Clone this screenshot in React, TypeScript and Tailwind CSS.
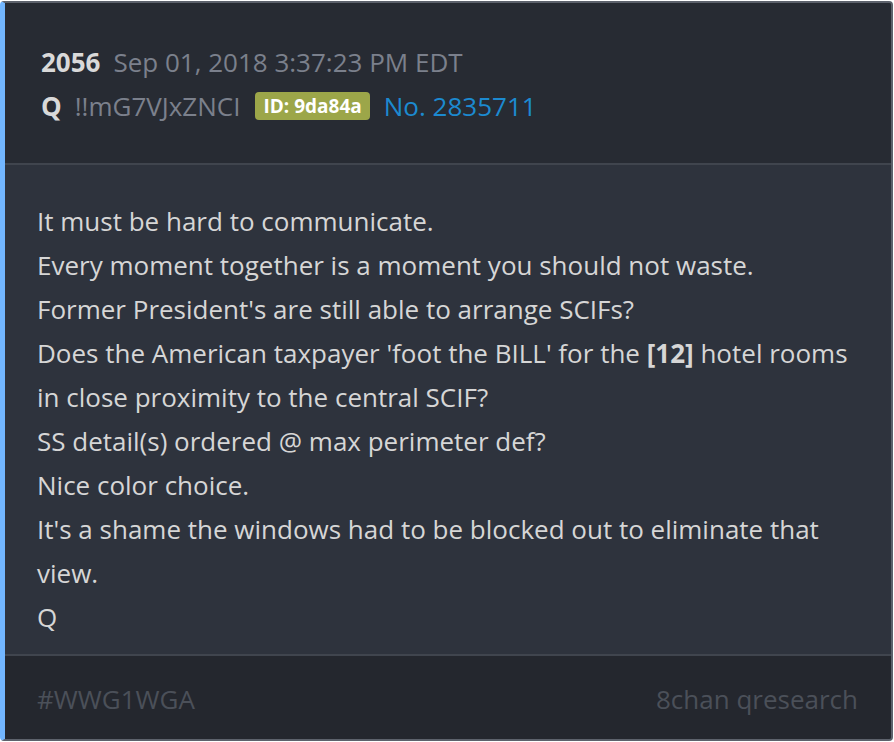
export default function App() {
  const lines = [
    "It must be hard to communicate.",
    "Every moment together is a moment you should not waste.",
    "Former President's are still able to arrange SCIFs?",
  ];
  return (
    <div className="min-h-screen bg-white" style={{ fontFamily: "'Open Sans', 'Liberation Sans', sans-serif" }}>
      <div className="w-[894px] h-[742px] pt-[1px] pr-[1px] pb-[1px]">
        <div className="flex h-full flex-col overflow-hidden rounded-[4px] border-2 border-l-[5px] border-[#5d626c] border-l-[#72b6ff] bg-[#2e333d]">
          {/* header */}
          <div className="bg-[#272b33] pl-[36px] pt-[37px] pb-[35px] text-[26px] leading-[44px]">
            <div className="flex items-center">
              <span className="font-bold text-[#d9d9d9]">2056</span>
              <span className="ml-[13px] text-[#7b808c]">Sep 01, 2018 3:37:23 PM EDT</span>
            </div>
            <div className="flex items-center">
              <span className="font-bold text-[#d9d9d9]">Q</span>
              <span className="ml-[13px] text-[#7b808c]">!!mG7VJxZNCI</span>
              <span className="ml-[15px] rounded-[4px] bg-[#9ca649] px-[8px] text-[19px] leading-[28px] font-bold text-white">
                ID: 9da84a
              </span>
              <span className="ml-[14px] text-[#1c8ad0]">No. 2835711</span>
            </div>
          </div>
          <div className="h-[2px] bg-[#40454e]" />
          {/* body */}
          <div className="flex-1 pl-[32px] pr-[30px] pt-[34px] text-[26px] leading-[44px] text-[#d6d6d6]">
            {lines.map((l) => (
              <div key={l}>{l}</div>
            ))}
            <div>
              Does the American taxpayer 'foot the BILL' for the <span className="font-bold">[12]</span> hotel rooms in close proximity to the central SCIF?
            </div>
            <div>SS detail(s) ordered @ max perimeter def?</div>
            <div>Nice color choice.</div>
            <div>It's a shame the windows had to be blocked out to eliminate that view.</div>
            <div>Q</div>
          </div>
          <div className="h-[2px] bg-[#40454e]" />
          {/* footer */}
          <div className="flex h-[83px] items-center justify-between bg-[#24272e] pl-[32px] pr-[33px] pt-[4px] text-[26px] text-[#4b5059]">
            <span>#WWG1WGA</span>
            <span>8chan qresearch</span>
          </div>
        </div>
      </div>
    </div>
  );
}
